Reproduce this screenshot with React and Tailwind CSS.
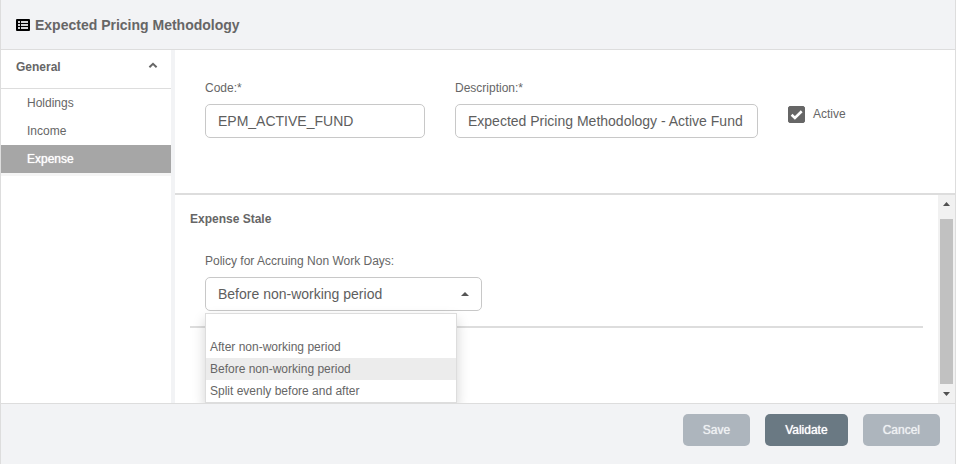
import React, { useState } from "react";

const NAV_ITEMS = ["Holdings", "Income", "Expense"];
const POLICIES = [
  "",
  "After non-working period",
  "Before non-working period",
  "Split evenly before and after",
];

const fieldClass =
  "h-[34px] rounded-[5px] border border-[#c8c8c8] bg-white px-3 text-sm text-[#5e5e5e] outline-none";

function Header() {
  return (
    <header className="flex h-[50px] items-center gap-[5px] border-b border-[#dddddd] px-[15px]">
      <svg width="14" height="12" viewBox="0 0 14 12" aria-hidden="true">
        <rect width="14" height="12" rx="1" fill="#000" />
        <path
          d="M2 2h2v2H2zM5 2h7v2H5zM2 5h2v2H2zM5 5h7v2H5zM2 8h2v2H2zM5 8h7v2H5z"
          fill="#d4d5d7"
        />
      </svg>
      <h1 className="text-sm leading-5 font-bold text-[#666]">
        Expected Pricing Methodology
      </h1>
    </header>
  );
}

function Sidebar({ current, onSelect }) {
  return (
    <nav className="w-[170px] shrink-0 bg-white">
      <button
        type="button"
        aria-expanded="true"
        className="flex h-[39px] w-full items-center justify-between border-b border-[#dddddd] pr-[13px] pb-1 pl-[15px] font-bold"
      >
        General
        <svg width="10" height="10" viewBox="0 0 10 10" aria-hidden="true">
          <path d="M1.4 5.2 5 1.8l3.6 3.4" fill="none" stroke="#666" strokeWidth="2" />
        </svg>
      </button>
      <ul className="border-b-3 border-[#f5f5f5]">
        {NAV_ITEMS.map((item) => (
          <li key={item}>
            <a
              href={"#" + item.toLowerCase()}
              onClick={() => onSelect(item)}
              className={
                item === current
                  ? "block h-7 bg-[#a6a6a6] pl-[26px] leading-7 text-white [text-shadow:0_0_1px_currentColor]"
                  : "block h-7 pl-[26px] leading-7"
              }
            >
              {item}
            </a>
          </li>
        ))}
      </ul>
    </nav>
  );
}

function Details() {
  return (
    <section className="flex gap-[30px] border-b-2 border-[#dddddd] px-[30px] pt-[30px] pb-[55px]">
      <div className="flex w-[220px] flex-col gap-2">
        <label htmlFor="code" className="leading-4">Code:*</label>
        <input id="code" className={fieldClass} defaultValue="EPM_ACTIVE_FUND" />
      </div>
      <div className="flex w-[303px] flex-col gap-2">
        <label htmlFor="description" className="leading-4">Description:*</label>
        <input
          id="description"
          className={fieldClass}
          defaultValue="Expected Pricing Methodology - Active Fund"
        />
      </div>
      <label className="mt-[25px] flex h-[18px] items-center gap-2">
        <span className="grid">
          <input
            type="checkbox"
            defaultChecked
            className="peer col-start-1 row-start-1 size-[17px] appearance-none rounded-[2px] border border-[#666] checked:bg-[#666]"
          />
          <svg
            className="pointer-events-none invisible col-start-1 row-start-1 peer-checked:visible"
            width="17"
            height="17"
            viewBox="0 0 17 17"
            aria-hidden="true"
          >
            <path d="m3.6 8.8 3.3 3.2 6.8-6.7" fill="none" stroke="#fff" strokeWidth="2.6" />
          </svg>
        </span>
        Active
      </label>
    </section>
  );
}

function PolicySelect() {
  const [value, setValue] = useState(POLICIES[2]);
  return (
    <div className="relative w-[277px]">
      <div className="grid items-center">
        <select
          id="policy"
          value={value}
          onChange={(e) => setValue(e.target.value)}
          className={fieldClass + " col-start-1 row-start-1 w-full appearance-none"}
        >
          {POLICIES.map((p) => (
            <option key={p}>{p}</option>
          ))}
        </select>
        <svg
          className="pointer-events-none col-start-1 row-start-1 mr-[13px] justify-self-end"
          width="8"
          height="4"
          viewBox="0 0 8 4"
          aria-hidden="true"
        >
          <path d="M0 4 4 0l4 4z" fill="#555" />
        </svg>
      </div>
      <ul
        role="listbox"
        aria-label="Policy options"
        className="absolute top-full left-0 z-10 mt-0.5 w-[252px] border border-[#dddddd] bg-white shadow-[0_6px_12px_rgba(0,0,0,0.18)]"
      >
        {POLICIES.map((p) => (
          <li
            key={p}
            role="option"
            aria-selected={p === value}
            onClick={() => setValue(p)}
            className={
              p === value
                ? "h-[22px] bg-[#ececec] px-1 leading-[22px]"
                : "h-[22px] px-1 leading-[22px]"
            }
          >
            {p}
          </li>
        ))}
      </ul>
    </div>
  );
}

function ScrollRail() {
  return (
    <div className="flex w-[17px] shrink-0 flex-col items-center bg-[#f1f1f1]" aria-hidden="true">
      <svg width="17" height="24" viewBox="0 0 17 24">
        <path d="M5 11 8.5 7 12 11z" fill="#505050" />
      </svg>
      <div className="w-[13px] grow bg-[#c1c1c1]" />
      <svg width="17" height="19" viewBox="0 0 17 19">
        <path d="M5 8h7l-3.500 4z" fill="#505050" />
      </svg>
    </div>
  );
}

function ExpenseStale() {
  return (
    <section className="flex grow overflow-hidden">
      <div className="grow px-[15px] pt-4 pb-[75px]">
        <h2 className="leading-4 font-bold">Expense Stale</h2>
        <div className="flex flex-col gap-2 border-b-2 border-[#dddddd] px-[15px] pt-[26px] pb-[15px]">
          <label htmlFor="policy" className="leading-4">
            Policy for Accruing Non Work Days:
          </label>
          <PolicySelect />
        </div>
      </div>
      <ScrollRail />
    </section>
  );
}

function Footer() {
  const base = "h-8 rounded-[5px] px-5 [text-shadow:0_0_1px_currentColor] ";
  return (
    <footer className="flex grow items-start justify-end gap-[15px] border-t border-[#dddddd] px-[15px] pt-[10px] pb-[18px]">
      <button type="button" disabled className={base + "bg-[#adb5bd] text-[#eff1f3]"}>
        Save
      </button>
      <button type="button" className={base + "bg-[#6a7983] text-white"}>
        Validate
      </button>
      <button type="button" className={base + "bg-[#adb5bd] text-[#eff1f3]"}>
        Cancel
      </button>
    </footer>
  );
}

export default function App() {
  const [current, setCurrent] = useState("Expense");
  return (
    <div className="flex min-h-screen flex-col border-x border-[#dddddd] bg-[#f2f3f5] font-['Liberation_Sans',Arial,sans-serif] text-xs text-[#666]">
      <Header />
      <main className="flex gap-1">
        <Sidebar current={current} onSelect={setCurrent} />
        <div className="flex min-w-0 grow flex-col bg-white">
          <Details />
          <ExpenseStale />
        </div>
      </main>
      <Footer />
    </div>
  );
}
